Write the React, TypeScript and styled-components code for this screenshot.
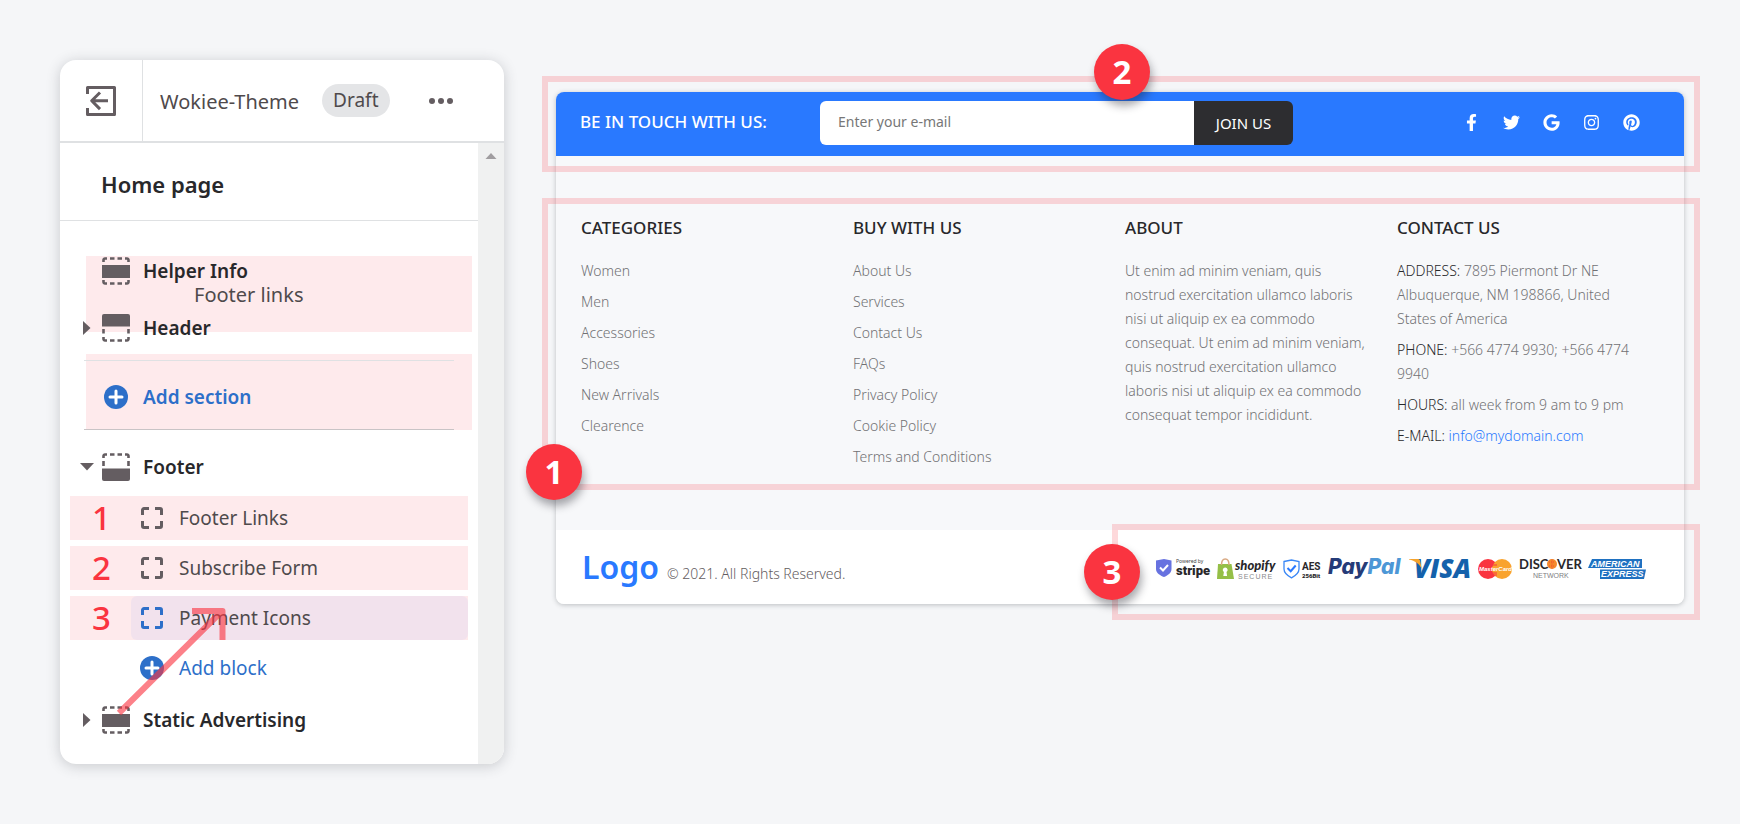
import React from "react";
import styled, { createGlobalStyle, css } from "styled-components";
import { FaFacebookF, FaGoogle, FaInstagram, FaPinterest, FaTwitter } from "react-icons/fa";

const color = {
  page: "#f5f6f8",
  surface: "#ffffff",
  soft: "#f7f8fa",
  line: "#dfe1e3",
  ink: "#28282b",
  text: "#4f4a4c",
  icon: "#645d61",
  muted: "#717174",
  link: "#2d6fc9",
  brand: "#2979ff",
  mark: "#fa3440",
  tint: "rgba(250, 52, 64, 0.1)",
  frame: "rgba(250, 52, 64, 0.19)",
};

const GlobalStyle = createGlobalStyle`
  *, *::before, *::after { box-sizing: border-box; }
  body {
    margin: 0;
    background: ${color.page};
    color: ${color.ink};
    font-family: "Noto Sans", "Open Sans", sans-serif;
  }
  button, input { font: inherit; }
  ul, p, h1, h2, h3 { margin: 0; padding: 0; }
  ul { list-style: none; }
  a { color: inherit; text-decoration: none; }
`;

const Page = styled.div`
  display: flex;
  align-items: flex-start;
  gap: 52px;
  padding: 60px 56px 60px 60px;
`;

/* ---------- editor sidebar ---------- */

const Sidebar = styled.aside`
  flex: none;
  width: 444px;
  border-radius: 16px;
  background: ${color.surface};
  box-shadow: 0 2px 14px rgba(40, 45, 55, 0.22);
  overflow: hidden;
`;

const SidebarHeader = styled.header`
  display: flex;
  align-items: center;
  height: 83px;
  border-bottom: 2px solid ${color.line};
`;

const IconButton = styled.button`
  display: grid;
  place-items: center;
  padding: 0;
  border: 0;
  background: none;
  color: ${color.icon};
  cursor: pointer;
`;

const ExitButton = styled(IconButton)`
  width: 83px;
  height: 100%;
  border-right: 1px solid ${color.line};
`;

const ThemeName = styled.h1`
  margin-left: 17px;
  padding-top: 2px;
  font-size: 20px;
  font-weight: 400;
  line-height: 28px;
  color: ${color.text};
`;

const StatusPill = styled.span`
  margin: 0 38px 0 23px;
  padding: 0 11px;
  border-radius: 17px;
  background: #e4e5e7;
  color: ${color.text};
  font-size: 19px;
  line-height: 33px;
`;

const SidebarBody = styled.div`
  display: flex;
`;

const Tree = styled.div`
  flex: 1;
  min-width: 0;
  padding-bottom: 29px;
`;

const ScrollTrack = styled.div`
  display: flex;
  justify-content: center;
  width: 26px;
  padding-top: 9px;
  background: #f0f1f1;
  color: #a09da0;
`;

const TemplateName = styled.h2`
  margin-bottom: 35px;
  padding: 27px 0 22px 41px;
  border-bottom: 1px solid ${color.line};
  font-size: 22px;
  font-weight: 600;
  line-height: 28px;
`;

const Group = styled.section`
  position: relative;
  isolation: isolate;
`;

const Tint = styled.div`
  position: absolute;
  inset: 0 6px auto 26px;
  z-index: -1;
  height: 76px;
  background: ${color.tint};
`;

const TreeRow = styled.div`
  display: flex;
  align-items: center;
  height: 30px;
  padding-left: 18px;
  font-size: 19px;
  font-weight: 600;
`;

const ArrowSlot = styled.span`
  display: grid;
  width: 18px;
  height: 18px;
  margin-right: 6px;
`;

const GlyphSlot = styled.span`
  display: grid;
  place-items: center;
  flex: none;
  width: 28px;
  margin-right: 13px;
  color: ${color.icon};
`;

const Note = styled.p`
  padding: 0 0 9px 134px;
  font-size: 20px;
  line-height: 18px;
  color: ${color.text};
`;

const AddButton = styled.button`
  display: flex;
  align-items: center;
  gap: 15px;
  padding: 0;
  border: 0;
  background: none;
  color: ${color.link};
  font-size: 19px;
  line-height: 28px;
  cursor: pointer;
`;

const AddSectionGroup = styled(Group)`
  margin: 11px 0 22px;
  padding: 6px 24px 0;
`;

const AddSection = styled(AddButton)`
  width: 100%;
  height: 70px;
  padding: 4px 0 0 20px;
  border-top: 1px solid ${color.line};
  border-bottom: 1px solid #c9c4c6;
  font-weight: 600;
`;

const BlockList = styled.ul`
  display: flex;
  flex-direction: column;
  gap: 6px;
  margin: 14px 10px 15px;
`;

const BlockRow = styled.li<{ $marked?: boolean }>`
  display: flex;
  align-items: center;
  height: 44px;
  ${(p) => p.$marked && css`background: ${color.tint};`}
`;

const BlockNumber = styled.span`
  width: 61px;
  padding-left: 22px;
  color: ${color.mark};
  font-size: 33px;
  font-weight: 500;
  line-height: 44px;
`;

const BlockLabel = styled.button<{ $selected?: boolean }>`
  display: flex;
  align-items: center;
  gap: 16px;
  flex: 1;
  height: 100%;
  padding: 0 10px;
  border: 0;
  border-radius: 6px;
  background: ${(p) => (p.$selected ? "rgba(120, 160, 255, 0.09)" : "none")};
  color: ${color.text};
  font-size: 19px;
  text-align: left;
  cursor: pointer;

  svg { color: ${(p) => (p.$selected ? color.link : color.icon)}; }
`;

const AddBlock = styled(AddButton)`
  margin-left: 70px;
`;

const DragArrow = styled.svg`
  position: absolute;
  left: 56px;
  top: 154px;
  pointer-events: none;
`;

/* ---------- storefront footer preview ---------- */

const Preview = styled.main`
  flex: 1;
  min-width: 0;
  margin-top: 32px;
  border-radius: 8px;
  box-shadow: 0 1px 5px rgba(40, 45, 55, 0.28);
`;

const Frame = styled.div<{ $inset: string }>`
  position: absolute;
  inset: ${(p) => p.$inset};
  z-index: 1;
  border: 6px solid ${color.frame};
  pointer-events: none;
`;

const Badge = styled.span<{ $x: string; $y: string }>`
  position: absolute;
  left: ${(p) => p.$x};
  top: ${(p) => p.$y};
  z-index: 2;
  width: 56px;
  height: 56px;
  margin: -28px 0 0 -28px;
  border-radius: 50%;
  background: ${color.mark};
  box-shadow: 2px 6px 8px rgba(30, 30, 40, 0.38);
  color: #fff;
  font-size: 33px;
  font-weight: 700;
  line-height: 56px;
  text-align: center;
`;

const SubscribeBar = styled.section`
  position: relative;
  display: flex;
  align-items: center;
  height: 64px;
  padding: 0 43px 2px 24px;
  border-radius: 8px 8px 0 0;
  background: ${color.brand};
  color: #fff;
`;

const SubscribeTitle = styled.label`
  flex: none;
  width: 240px;
  padding-bottom: 3px;
  font-size: 17px;
  font-weight: 500;
  line-height: 24px;
`;

const SubscribeForm = styled.form`
  display: flex;
  flex: 0 1 473px;
  min-width: 0;
  height: 44px;
`;

const EmailInput = styled.input`
  flex: 1;
  min-width: 0;
  padding: 0 18px 3px;
  border: 0;
  border-radius: 6px 0 0 6px;
  background: #fff;
  color: ${color.ink};
  font-size: 14px;

  &::placeholder { color: #777; opacity: 1; }
`;

const JoinButton = styled.button`
  width: 99px;
  padding: 0;
  border: 0;
  border-radius: 0 6px 6px 0;
  background: #2d2d30;
  color: #fff;
  font-size: 15px;
  font-weight: 400;
  cursor: pointer;
`;

const SocialLinks = styled.nav`
  display: flex;
  gap: 20px;
  margin-left: auto;
  padding-bottom: 2px;
`;

const SocialLink = styled.a`
  display: grid;
  place-items: center;
  width: 20px;
  height: 20px;
  font-size: 17px;
`;

const FooterLinks = styled.section`
  position: relative;
  display: grid;
  grid-template-columns: repeat(4, 1fr);
  min-height: 374px;
  padding: 60px 15px 60px 25px;
  background: ${color.soft};
`;

const Column = styled.div`
  padding-right: 28px;
  color: ${color.muted};
  font-size: 14px;
  font-weight: 300;
  line-height: 24px;
`;

const ColumnTitle = styled.h3`
  margin-bottom: 19px;
  color: ${color.ink};
  font-size: 17px;
  font-weight: 500;
  line-height: 24px;
`;

const Stack = styled.ul`
  display: flex;
  flex-direction: column;
  gap: 7px;
`;

const Term = styled.span`
  color: ${color.ink};
`;

const MailLink = styled.a`
  color: ${color.brand};
`;

const BottomBar = styled.section`
  position: relative;
  display: flex;
  align-items: center;
  height: 74px;
  padding: 4px 38px 0 26px;
  border-radius: 0 0 8px 8px;
  background: ${color.surface};
`;

const Brand = styled.div`
  display: flex;
  align-items: baseline;
  gap: 8px;
  padding-bottom: 5px;
  color: ${color.icon};
  font-size: 14px;
  font-weight: 300;
`;

const BrandName = styled.a`
  color: ${color.brand};
  font-size: 32px;
  font-weight: 600;
  line-height: 44px;
`;

const PaymentList = styled.ul`
  display: flex;
  gap: 7px;
  margin-left: auto;

  li, svg { display: block; }
  svg { overflow: visible; }
`;

/* ---------- drawings ---------- */

const ExitIcon = () => (
  <svg width="30" height="30" fill="none" stroke="currentColor" strokeWidth="3" strokeLinejoin="round">
    <path d="M1.5 8V1.5h27v27h-27V22" />
    <path d="M22 14.800H6M14 6.500l-8.300 8.300 8.300 8.300" />
  </svg>
);

const DotsIcon = () => (
  <svg width="26" height="8" fill="currentColor">
    <circle cx="4" cy="4" r="3" />
    <circle cx="13" cy="4" r="3" />
    <circle cx="22" cy="4" r="3" />
  </svg>
);

const ScrollUpIcon = () => (
  <svg width="12" height="8" fill="currentColor"><path d="M6 1l5.500 6H.5z" /></svg>
);

const CaretRight = () => (
  <svg width="8" height="14" fill="currentColor"><path d="M0 0l7.500 7L0 14z" /></svg>
);

const CaretDown = () => (
  <svg width="14" height="8" fill="currentColor"><path d="M0 0h14L7 7.500z" /></svg>
);

const dashTop = "M1.500 5V3a1.500 1.500 0 0 1 1.500-1.500h2M8 1.500h4.500M15.500 1.500H20M23 1.500h2A1.500 1.500 0 0 1 26.500 3v2";
const dashBottom = "M1.500 23v2A1.500 1.500 0 0 0 3 26.500h2M8 26.500h4.500M15.500 26.500H20M23 26.500h2a1.500 1.500 0 0 0 1.500-1.500v-2";

const SectionIcon = ({ kind }: { kind: "middle" | "top" | "bottom" }) => (
  <svg width="28" height="28" fill="none" stroke="currentColor" strokeWidth="2.600">
    {kind !== "top" && <path d={dashTop} />}
    {kind !== "bottom" && <path d={dashBottom} />}
    {kind === "top" && <path d="M1.500 15v4.500M26.500 15v4.500" />}
    {kind === "bottom" && <path d="M1.500 8v5M26.500 8v5" />}
    {kind === "middle" && <path d="M0 8h28v13H0z" fill="currentColor" stroke="none" />}
    {kind === "top" && <path d="M2 0h24a2 2 0 0 1 2 2v10.500H0V2a2 2 0 0 1 2-2z" fill="currentColor" stroke="none" />}
    {kind === "bottom" && <path d="M0 15.500h28V26a2 2 0 0 1-2 2H2a2 2 0 0 1-2-2z" fill="currentColor" stroke="none" />}
  </svg>
);

const BlockIcon = () => (
  <svg width="22" height="22" fill="none" stroke="currentColor" strokeWidth="3">
    <path d="M1.500 8V3A1.500 1.500 0 0 1 3 1.500h5M14 1.500h5A1.500 1.500 0 0 1 20.500 3v5M20.500 14v5a1.500 1.500 0 0 1-1.500 1.500h-5M8 20.500H3A1.500 1.500 0 0 1 1.500 19v-5" />
  </svg>
);

const PlusIcon = () => (
  <svg width="24" height="24">
    <circle cx="12" cy="12" r="12" fill="currentColor" />
    <path d="M12 6v12M6 12h12" stroke="#fff" strokeWidth="3" strokeLinecap="round" />
  </svg>
);

const StripeBadge = () => (
  <svg width="54" height="24" role="img" aria-label="Powered by Stripe">
    <path d="M0 3.500L8 2l7.500 1.500V12c0 4-4 6.500-7.500 8-4-1.500-8-4-8-8z" fill="#6772e0" />
    <path d="M4 10.500l3 3 5-5.500" fill="none" stroke="#fff" strokeWidth="2" />
    <text x="20" y="6" fontSize="5" fill="#444">Powered by</text>
    <text x="20" y="18" fontSize="13" fontFamily="Roboto, sans-serif" fontWeight="900" fill="#29272a">stripe</text>
  </svg>
);

const ShopifyBadge = () => (
  <svg width="59" height="24" role="img" aria-label="Shopify Secure">
    <path d="M1 7h13.500L17 22H0z" fill="#95bf47" />
    <path d="M4.500 8c0-8 7.500-8 7.500 0" fill="none" stroke="#d9a983" strokeWidth="1.500" />
    <path d="M8.200 10.500a2.500 2.500 0 0 1 1.300 4.600l.6 3.900H6.300l.6-3.900a2.500 2.500 0 0 1 1.300-4.600z" fill="#fff" />
    <text x="18" y="13" fontSize="13" fontFamily="Lato, sans-serif" fontStyle="italic" fontWeight="900" fill="#29272a">shopify</text>
    <text x="21" y="22" fontSize="7" fontFamily="Liberation Sans, sans-serif" letterSpacing="1" fill="#8a8a8d">SECURE</text>
  </svg>
);

const AesBadge = () => (
  <svg width="38" height="24" role="img" aria-label="AES 256Bit">
    <path d="M1 4.500L8.500 3 16 4.500V12c0 4.500-4 7-7.500 8.800C5 19 1 16.500 1 12z" fill="none" stroke="#3b88f6" strokeWidth="1.300" />
    <path d="M4.500 11l3.200 3.200 5-5.700" fill="none" stroke="#2979ff" strokeWidth="2" />
    <text x="19" y="13" fontSize="10" fontFamily="Roboto, sans-serif" fontWeight="700" fill="#29272a">AES</text>
    <text x="19" y="21" fontSize="6" fontFamily="Roboto, sans-serif" fontWeight="900" fill="#29272a">256Bit</text>
  </svg>
);

const PayPalLogo = () => (
  <svg width="74" height="24" role="img" aria-label="PayPal">
    <text x="0" y="17" fontSize="21" fontFamily="Inter, sans-serif" fontStyle="italic" fontWeight="800" fill="#253b78">
      Pay<tspan fill="#4d97d6">Pal</tspan>
    </text>
  </svg>
);

const VisaLogo = () => (
  <svg width="62" height="24" role="img" aria-label="Visa">
    <text x="5" y="21" fontSize="26" fontFamily="Open Sans, sans-serif" fontStyle="italic" fontWeight="800" fill="#1461ab">VISA</text>
    <path d="M0 2h8.500c1.500 0 2.300.6 2.600 2l1.700 8C10.500 7 6 3.500 0 2.500z" fill="#f5a32c" />
  </svg>
);

const MasterCardLogo = () => (
  <svg width="34" height="24" role="img" aria-label="MasterCard">
    <circle cx="10" cy="12" r="10" fill="#fa3440" />
    <circle cx="24" cy="12" r="10" fill="#f9a32e" />
    <path d="M14 8h5M14 16h5M15 18h4" stroke="#fa3440" />
    <text x="1" y="14" fontSize="6" fontFamily="Liberation Sans, sans-serif" fontStyle="italic" fontWeight="700" fill="#fff">MasterCard</text>
  </svg>
);

const DiscoverLogo = () => (
  <svg width="62" height="24" role="img" aria-label="Discover Network">
    <g fontFamily="Lato, sans-serif" fontSize="13" fontWeight="700" fill="#29272a">
      <text x="0" y="12">DISC</text>
      <text x="38" y="12">VER</text>
    </g>
    <circle cx="33" cy="7" r="5" fill="#f58a2c" />
    <path d="M30 5h6M30 9h6M33 2.500v9" stroke="#f3512f" strokeDasharray="1 1" />
    <text x="14" y="21" fontSize="7" fontFamily="Liberation Sans, sans-serif" fill="#808083">NETWORK</text>
  </svg>
);

const AmexLogo = () => (
  <svg width="58" height="24" role="img" aria-label="American Express">
    <path d="M4 2h50v9H0z" fill="#1f71c1" />
    <path d="M12 12.500h46L56 22H12z" fill="#1f71c1" />
    <g fontFamily="Liberation Sans, sans-serif" fontSize="9" fontStyle="italic" fontWeight="700" fill="#fff">
      <text x="3" y="10">AMERICAN</text>
      <text x="13" y="20">EXPRESS</text>
    </g>
  </svg>
);

/* ---------- data ---------- */

const blocks = ["Footer Links", "Subscribe Form", "Payment Icons"];
const selectedBlock = "Payment Icons";

const linkColumns = [
  { title: "CATEGORIES", links: ["Women", "Men", "Accessories", "Shoes", "New Arrivals", "Clearence"] },
  {
    title: "BUY WITH US",
    links: ["About Us", "Services", "Contact Us", "FAQs", "Privacy Policy", "Cookie Policy", "Terms and Conditions"],
  },
];

const socials = [
  { name: "Facebook", Icon: FaFacebookF },
  { name: "Twitter", Icon: FaTwitter },
  { name: "Google", Icon: FaGoogle },
  { name: "Instagram", Icon: FaInstagram },
  { name: "Pinterest", Icon: FaPinterest },
];

const payments = [StripeBadge, ShopifyBadge, AesBadge, PayPalLogo, VisaLogo, MasterCardLogo, DiscoverLogo, AmexLogo];

const SectionRow = ({ label, kind, open }: { label: string; kind: "middle" | "top" | "bottom"; open?: boolean }) => (
  <TreeRow>
    <ArrowSlot>
      {open !== undefined && (
        <IconButton type="button" aria-label={`Toggle ${label}`} aria-expanded={open}>
          {open ? <CaretDown /> : <CaretRight />}
        </IconButton>
      )}
    </ArrowSlot>
    <GlyphSlot><SectionIcon kind={kind} /></GlyphSlot>
    {label}
  </TreeRow>
);

const EditorSidebar = () => (
  <Sidebar>
    <SidebarHeader>
      <ExitButton type="button" aria-label="Exit editor"><ExitIcon /></ExitButton>
      <ThemeName>Wokiee-Theme</ThemeName>
      <StatusPill>Draft</StatusPill>
      <IconButton type="button" aria-label="More actions"><DotsIcon /></IconButton>
    </SidebarHeader>
    <SidebarBody>
      <Tree>
        <TemplateName>Home page</TemplateName>
        <Group>
          <SectionRow label="Helper Info" kind="middle" />
          <Note>Footer links</Note>
          <SectionRow label="Header" kind="top" open={false} />
          <Tint />
        </Group>
        <AddSectionGroup>
          <AddSection type="button"><PlusIcon />Add section</AddSection>
          <Tint />
        </AddSectionGroup>
        <Group>
          <SectionRow label="Footer" kind="bottom" open />
          <BlockList>
            {blocks.map((name, i) => (
              <BlockRow key={name} $marked>
                <BlockNumber>{i + 1}</BlockNumber>
                <BlockLabel type="button" $selected={name === selectedBlock}>
                  <BlockIcon />
                  {name}
                </BlockLabel>
              </BlockRow>
            ))}
            <BlockRow>
              <AddBlock type="button"><PlusIcon />Add block</AddBlock>
            </BlockRow>
          </BlockList>
          <SectionRow label="Static Advertising" kind="middle" open={false} />
          <DragArrow width="112" height="112" fill="none" stroke={color.mark} strokeOpacity="0.62" strokeWidth="6" strokeLinejoin="round">
            <path d="M3 107L104 7M76 5h30.500v29" />
          </DragArrow>
        </Group>
      </Tree>
      <ScrollTrack><ScrollUpIcon /></ScrollTrack>
    </SidebarBody>
  </Sidebar>
);

const FooterPreview = () => (
  <Preview>
    <SubscribeBar>
      <SubscribeTitle htmlFor="email">BE IN TOUCH WITH US:</SubscribeTitle>
      <SubscribeForm>
        <EmailInput id="email" type="email" placeholder="Enter your e-mail" />
        <JoinButton type="button">JOIN US</JoinButton>
      </SubscribeForm>
      <SocialLinks>
        {socials.map(({ name, Icon }) => (
          <SocialLink key={name} href="#" aria-label={name}><Icon /></SocialLink>
        ))}
      </SocialLinks>
      <Frame $inset="-16px -16px -16px -14px" />
      <Badge $x="calc(50% + 2px)" $y="-20px">2</Badge>
    </SubscribeBar>
    <FooterLinks>
      {linkColumns.map(({ title, links }) => (
        <Column key={title}>
          <ColumnTitle>{title}</ColumnTitle>
          <Stack>
            {links.map((link) => (
              <li key={link}><a href="#">{link}</a></li>
            ))}
          </Stack>
        </Column>
      ))}
      <Column>
        <ColumnTitle>ABOUT</ColumnTitle>
        <p>
          Ut enim ad minim veniam, quis nostrud exercitation ullamco laboris nisi ut aliquip ex ea commodo
          consequat. Ut enim ad minim veniam, quis nostrud exercitation ullamco laboris nisi ut aliquip ex ea
          commodo consequat tempor incididunt.
        </p>
      </Column>
      <Column>
        <ColumnTitle>CONTACT US</ColumnTitle>
        <Stack>
          <li><Term>ADDRESS:</Term> 7895 Piermont Dr NE Albuquerque, NM 198866, United States of America</li>
          <li><Term>PHONE:</Term> +566 4774 9930; +566 4774 9940</li>
          <li><Term>HOURS:</Term> all week from 9 am to 9 pm</li>
          <li><Term>E-MAIL:</Term> <MailLink href="mailto:info@mydomain.com">info@mydomain.com</MailLink></li>
        </Stack>
      </Column>
      <Frame $inset="42px -16px 40px -14px" />
      <Badge $x="-2px" $y="calc(100% - 58px)">1</Badge>
    </FooterLinks>
    <BottomBar>
      <Brand>
        <BrandName href="#">Logo</BrandName>
        <span>© 2021. All Rights Reserved.</span>
      </Brand>
      <PaymentList>
        {payments.map((Logo, i) => (
          <li key={i}><Logo /></li>
        ))}
      </PaymentList>
      <Frame $inset="-6px -16px -16px calc(50% - 8px)" />
      <Badge $x="calc(50% - 8px)" $y="42px">3</Badge>
    </BottomBar>
  </Preview>
);

export default function App() {
  return (
    <>
      <GlobalStyle />
      <Page>
        <EditorSidebar />
        <FooterPreview />
      </Page>
    </>
  );
}
